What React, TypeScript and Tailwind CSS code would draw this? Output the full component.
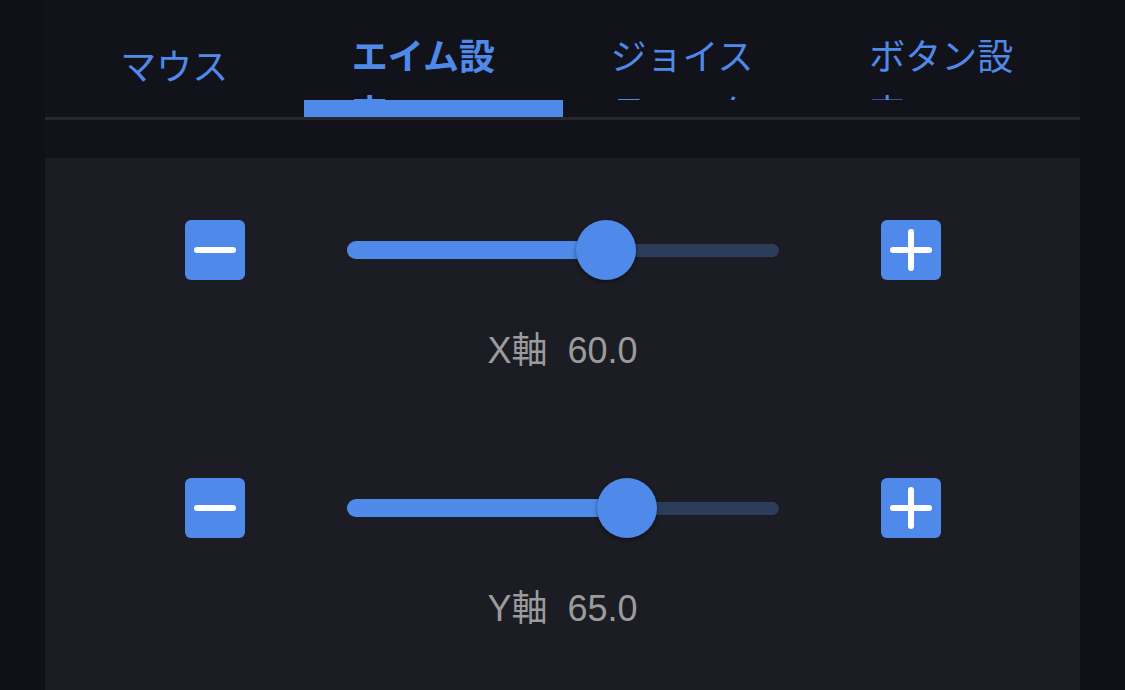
import { useState } from 'react';

const BLUE = 'bg-[#4f8aea]';

const tabs = ['マウス', 'エイム設定', 'ジョイスティック', 'ボタン設定'];

function MinusIcon() {
    return (
        <svg width="60" height="60" viewBox="0 0 60 60">
            <line x1="12" y1="30" x2="48" y2="30" stroke="white" strokeWidth="6" strokeLinecap="round" />
        </svg>
    );
}

function PlusIcon() {
    return (
        <svg width="60" height="60" viewBox="0 0 60 60">
            <line x1="12" y1="30" x2="48" y2="30" stroke="white" strokeWidth="6" strokeLinecap="round" />
            <line x1="30" y1="12" x2="30" y2="48" stroke="white" strokeWidth="6" strokeLinecap="round" />
        </svg>
    );
}

function AxisSlider({ label, value, onChange }: { label: string; value: number; onChange: (v: number) => void }) {
    const pct = Math.max(0, Math.min(100, value));

    return (
        <div className="flex flex-col items-center">
            <div className="flex items-center gap-[72px]">
                <button
                    className={`w-[60px] h-[60px] rounded-[6px] ${BLUE} flex items-center justify-center`}
                    onClick={() => onChange(Math.max(0, value - 5))}
                >
                    <MinusIcon />
                </button>

                {/* Slider */}
                <div className="w-[492px] h-[60px] px-[30px] flex items-center">
                    <div className="relative w-full h-[18px] flex items-center">
                        <div className="absolute left-0 right-0 h-[13px] rounded-full bg-[#2c3d5c]" />
                        <div
                            className={`absolute left-0 h-[18px] rounded-full ${BLUE}`}
                            style={{ width: `${pct}%` }}
                        />
                        <div
                            className={`absolute w-[60px] h-[60px] -ml-[30px] rounded-full ${BLUE} shadow-[0_2px_4px_rgba(0,0,0,0.45)]`}
                            style={{ left: `${pct}%` }}
                        />
                    </div>
                </div>

                <button
                    className={`w-[60px] h-[60px] rounded-[6px] ${BLUE} flex items-center justify-center`}
                    onClick={() => onChange(Math.min(100, value + 5))}
                >
                    <PlusIcon />
                </button>
            </div>

            <div className="mt-[44px] flex items-center gap-[20px] text-[36px] leading-[54px] text-[#9b9b9b] font-['Liberation_Sans','Noto_Sans_CJK_JP',sans-serif]">
                <span>{label}</span>
                <span>{value.toFixed(1)}</span>
            </div>
        </div>
    );
}

export default function App() {
    const [active, setActive] = useState(1);
    const [x, setX] = useState(60);
    const [y, setY] = useState(65);

    return (
        <div className="h-screen overflow-hidden bg-[#0f1119] font-['Noto_Sans_CJK_JP',sans-serif]">
            <div className="mx-[45px] h-full bg-[#11121a] pt-[28px] flex flex-col">
                {/* Tabs */}
                <div className="grid grid-cols-4">
                    {tabs.map((t, i) => (
                        <button
                            key={t}
                            onClick={() => setActive(i)}
                            className="h-[72px] overflow-hidden flex items-center justify-center px-[48px]"
                        >
                            <span
                                className={`max-h-[76px] text-left text-[36px] leading-[56px] text-[#4f8aea] ${
                                    i === active ? 'font-bold' : 'font-normal'
                                }`}
                            >
                                {t}
                            </span>
                        </button>
                    ))}
                </div>
                <div className="grid grid-cols-4 h-[17px]">
                    {tabs.map((t, i) => (
                        <div key={t} className={i === active ? BLUE : ''} />
                    ))}
                </div>
                <div className="h-[3px] bg-[#27272c]" />

                {/* Panel */}
                <div className="mt-[38px] flex-1 bg-[#1c1c24] pt-[62px] flex flex-col gap-[100px]">
                    <AxisSlider label="X軸" value={x} onChange={setX} />
                    <AxisSlider label="Y軸" value={y} onChange={setY} />
                </div>
            </div>
        </div>
    );
}
